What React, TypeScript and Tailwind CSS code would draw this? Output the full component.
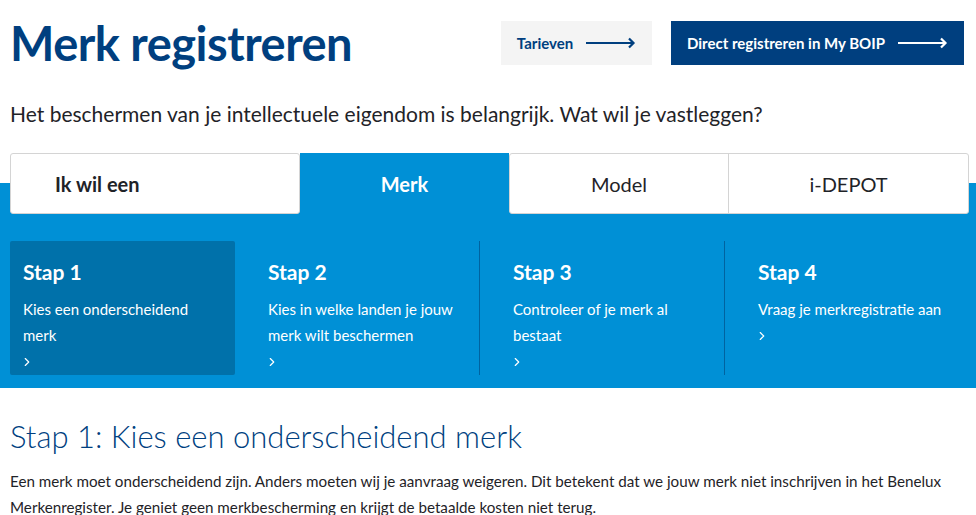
import { ChevronRight } from 'lucide-react';

const steps = [
  { title: 'Stap 1', text: 'Kies een onderscheidend merk', active: true },
  { title: 'Stap 2', text: 'Kies in welke landen je jouw merk wilt beschermen' },
  { title: 'Stap 3', text: 'Controleer of je merk al bestaat' },
  { title: 'Stap 4', text: 'Vraag je merkregistratie aan' },
];

function LongArrow({ className }: { className?: string }) {
  return (
    <svg width="50" height="12" viewBox="0 0 50 12" fill="none" className={className}>
      <path d="M0 6h48M43 1.5l4.5 4.5-4.5 4.5" stroke="currentColor" strokeWidth="2.2" />
    </svg>
  );
}

export default function App() {
  return (
    <div className="w-[976px] h-[515px] overflow-hidden bg-white font-['Lato',sans-serif] text-[#1f2328]">
      {/* Header */}
      <div className="flex items-start justify-between pl-[10px] pr-[12px] pt-[21px]">
        <h1 className="text-[47px] leading-[44px] font-bold text-[#003f7f] tracking-[-0.5px]">Merk registreren</h1>
        <div className="flex gap-[19px]">
          <a className="h-[44px] w-[151px] bg-[#f4f4f4] flex items-center justify-center gap-[13px] text-[15px] font-bold text-[#003f7f]">
            Tarieven <LongArrow />
          </a>
          <a className="h-[44px] w-[293px] bg-[#003f7f] flex items-center justify-center gap-[13px] text-[15px] font-bold text-white">
            Direct registreren in My BOIP <LongArrow />
          </a>
        </div>
      </div>

      <p className="pl-[10px] mt-[35px] text-[21px] leading-[28px]">
        Het beschermen van je intellectuele eigendom is belangrijk. Wat wil je vastleggen?
      </p>

      {/* Tabs + steps */}
      <div className="mt-[25px] bg-[linear-gradient(to_bottom,#ffffff_30px,#0090d6_30px)] pb-[13px]">
        <div className="flex px-[10px] pr-[7px] h-[61px]">
          <div className="w-[290px] bg-white border border-[#d4d4d4] rounded-[3px] flex items-center pl-[44px] text-[20px] font-bold">
            Ik wil een
          </div>
          <div className="w-[209px] bg-[#0090d6] flex items-center justify-center text-[20px] font-bold text-white">Merk</div>
          <div className="flex-1 flex bg-white border border-[#d4d4d4] rounded-[3px]">
            <div className="w-[219px] border-r border-[#d4d4d4] flex items-center justify-center text-[20px]">Model</div>
            <div className="flex-1 flex items-center justify-center text-[20px]">i-DEPOT</div>
          </div>
        </div>

        <div className="mt-[27px] mx-[10px] grid grid-cols-4 gap-[20px] w-[960px]">
          {steps.map((s) => (
            <div
              key={s.title}
              className={`h-[134px] px-[13px] pt-[17px] text-white ${
                s.active ? 'bg-[#0071aa] rounded-[2px]' : 'border-r border-[#0063a0]'
              } ${s.title === 'Stap 4' ? 'border-r-0' : ''}`}
            >
              <div className="text-[21px] leading-[28px] font-bold">{s.title}</div>
              <div className="mt-[10px] text-[15px] leading-[26px]">{s.text}</div>
              <ChevronRight size={14} strokeWidth={2} className="mt-[7px] -ml-[3px]" />
            </div>
          ))}
        </div>
      </div>

      <h2 className="pl-[10px] mt-[30px] text-[31px] leading-[36px] font-light text-[#003f7f]">
        Stap 1: Kies een onderscheidend merk
      </h2>
      <p className="pl-[10px] mt-[14px] text-[15.2px] leading-[26px] w-[966px]">
        Een merk moet onderscheidend zijn. Anders moeten wij je aanvraag weigeren. Dit betekent dat we jouw merk niet inschrijven in het Benelux Merkenregister. Je geniet geen merkbescherming en krijgt de betaalde kosten niet terug.
      </p>
    </div>
  );
}
